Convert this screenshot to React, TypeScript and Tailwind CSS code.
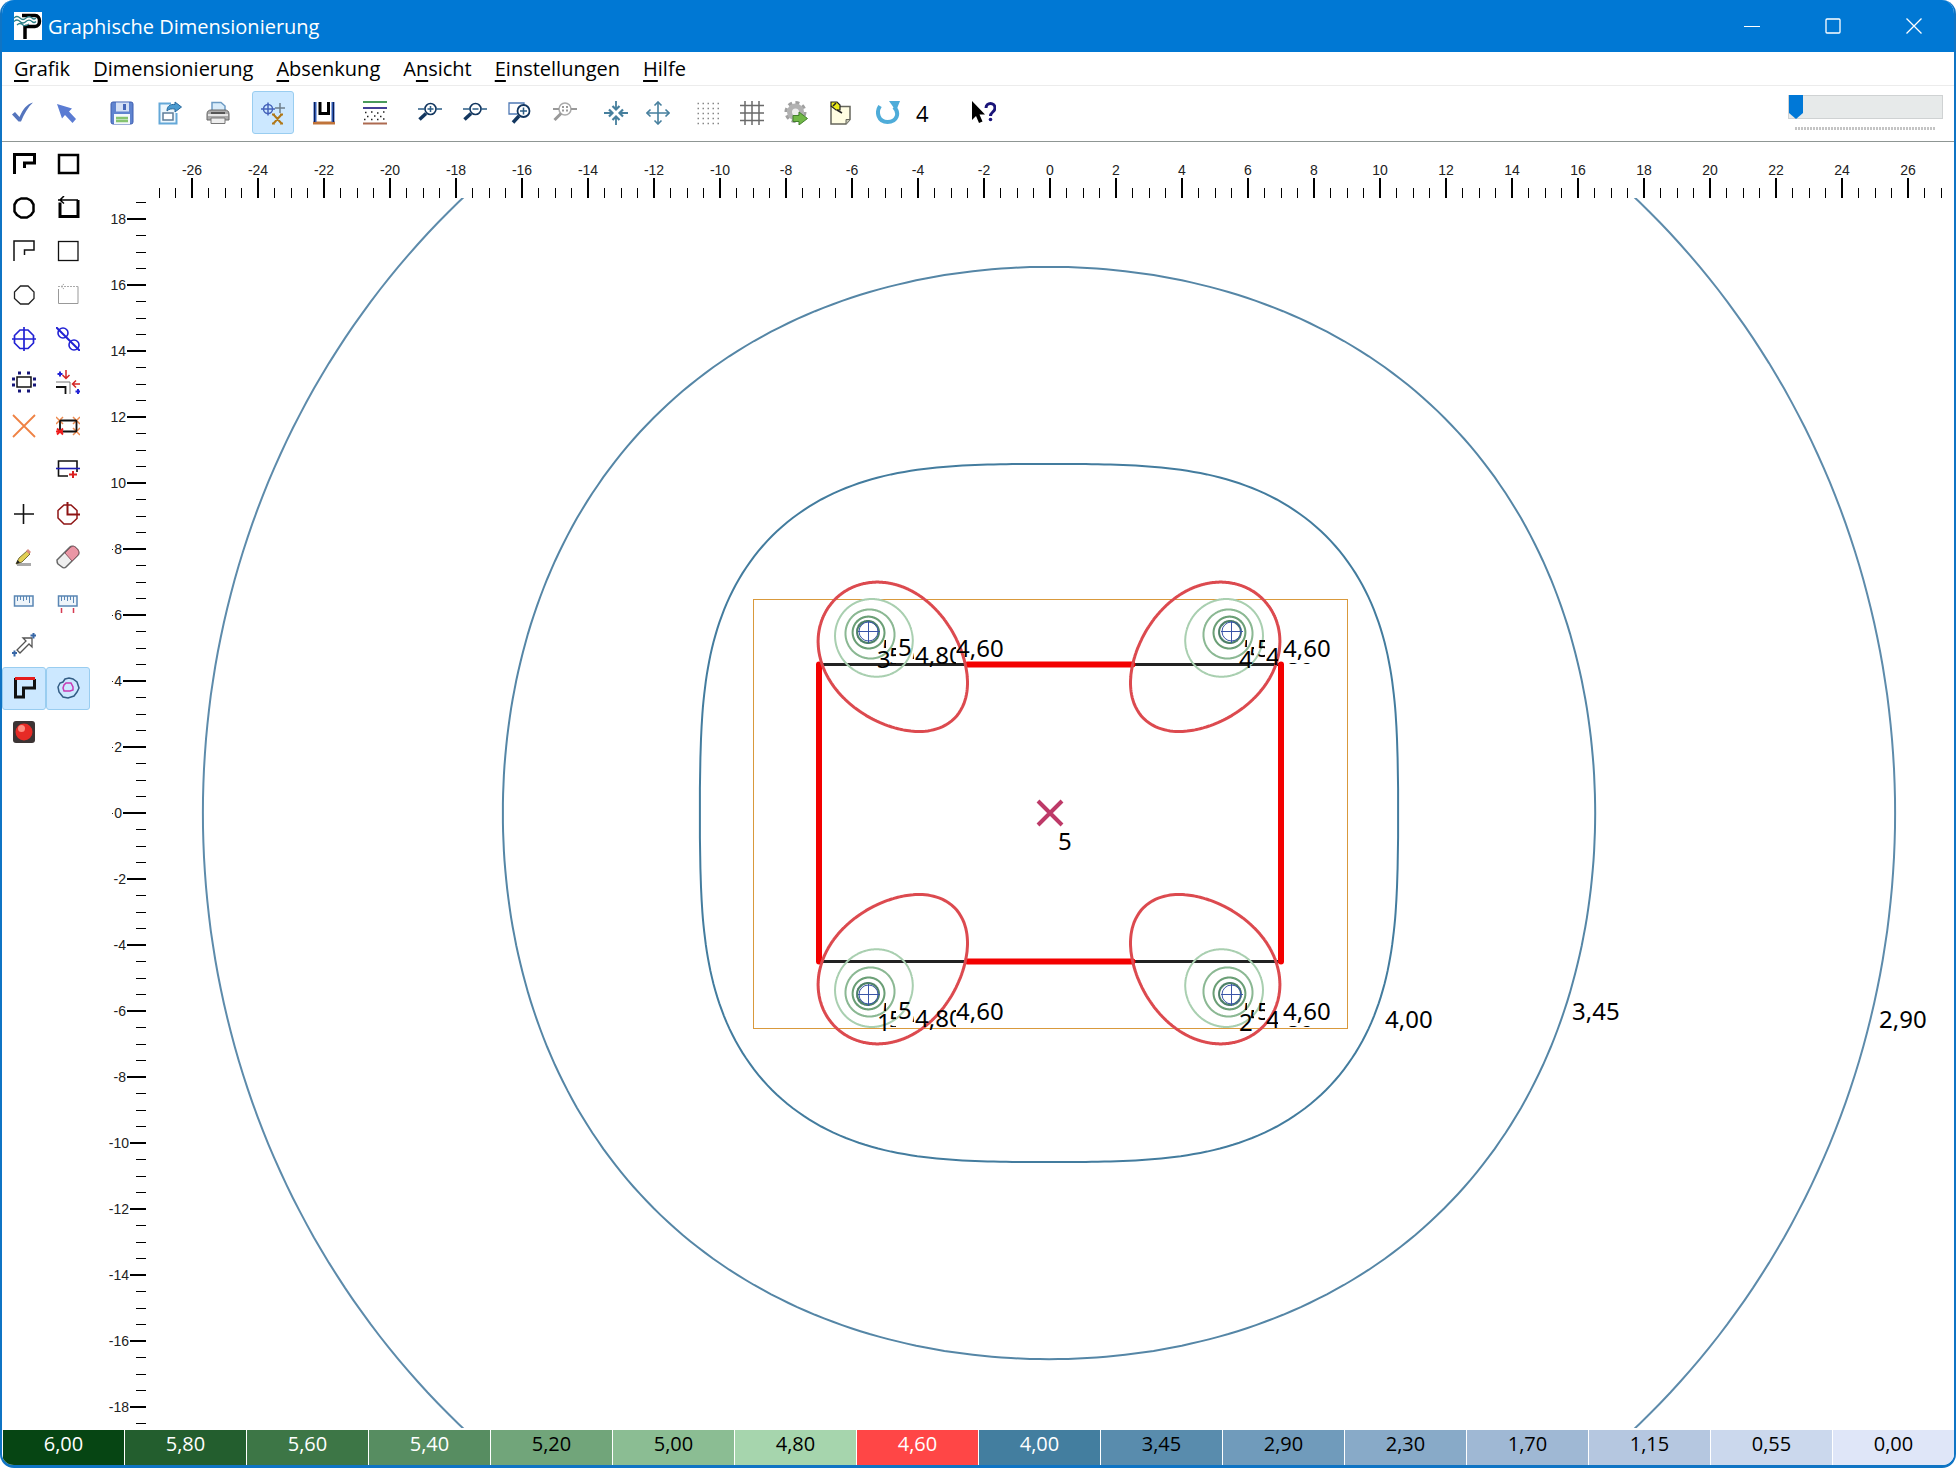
import { useState, type ReactNode } from 'react';
import clsx from 'clsx';

/* ---------- toolbar icons, all on a 24px grid ---------- */

function Icon({ children }: { children: ReactNode }) {
  return (
    <svg width="24" height="24" viewBox="0 0 24 24" fill="none" aria-hidden="true">
      {children}
    </svg>
  );
}

const icons = {
  check: <path d="M1 13.500 4 11l4.500 5C12 8 16 3 22 1.500 17 6 13 13 10 20.500H7.500Z" fill="#5575bd" />,
  pointer: <path d="M2 3 17 7.500l-3 3 7 7.500-3.500 4-7.500-8-3 3.500Z" fill="#5b7cd3" />,
  save: (
    <>
      <rect x="1" y="1" width="22" height="22" rx="2" fill="#5f83cf" stroke="#3f5eb0" />
      <rect x="6" y="1.500" width="13" height="9" fill="#d5e0f5" />
      <rect x="13" y="3" width="3" height="6" fill="#4667b8" />
      <rect x="4" y="13" width="16" height="10" fill="#f3f8fb" />
      <path d="M6 17h12M6 20h12" stroke="#86c470" strokeWidth="2.500" />
    </>
  ),
  exportFile: (
    <>
      <path d="M13 2.500H1.500v20h17V12" stroke="#64a8d8" strokeWidth="2" fill="#edf7fd" />
      <rect x="5" y="12" width="10" height="7" fill="#fff" stroke="#5d7d99" strokeWidth="1.500" />
      <path d="M9 10c0-5 3-7 8-6.500V1l6.500 5-6.500 5V8c-4-.5-6 0-8 2Z" fill="#4b9bd0" stroke="#28699c" />
    </>
  ),
  print: (
    <>
      <path d="M6 11V1.500h9l4 3.500v6" fill="#d9ecfa" stroke="#6d9bc4" strokeWidth="1.500" />
      <path d="M1 13c0-3 2-4 4-4h14c2 0 4 1 4 4v6H1Z" fill="#aaa" stroke="#666" />
      <path d="M2 14h20" stroke="#e6e6e6" strokeWidth="2" />
      <path d="M5 17h14v5.500H5Z" fill="#eee" stroke="#777" />
      <path d="M5 12h14" stroke="#555" strokeWidth="2" />
    </>
  ),
  wells: (
    <>
      <circle cx="7" cy="8" r="4.500" stroke="#4563ba" strokeWidth="1.500" />
      <path d="M7 1.500v13M0 8h14" stroke="#4563ba" strokeWidth="1.500" />
      <path d="M19 2v10M14 7h10" stroke="#6f7f8c" strokeWidth="1.500" />
      <path d="m12.500 13.500 8 9M20.500 13.500l-8 9M11 13.500h3M19 13.500h3M11 22.500h3M19 22.500h3" stroke="#b07818" strokeWidth="2" />
    </>
  ),
  pit: (
    <>
      <path d="M1 22h22" stroke="#c0743a" strokeWidth="3" />
      <path d="M3 1v20M21 1v20" stroke="#2f5bb5" strokeWidth="3" />
      <path d="M2.500 1v20M21.500 1v20" stroke="#0b1d55" strokeWidth="1" />
      <path d="M8 1v11.500h8.500V1" stroke="#000" strokeWidth="3" />
    </>
  ),
  layers: (
    <>
      <path d="M0 1h24" stroke="#4a9a5c" strokeWidth="2" />
      <path d="M0 7h24" stroke="#443f96" strokeWidth="2" />
      <path d="M0 22.500h24" stroke="#ad6a50" strokeWidth="2" />
      <path d="M2 11.500h1.500M8 11h1.500M14 12h1.500M20 11h1.500M4 15.500h1.500M11 15h1.500M17 15.500h1.500M1 18.500h1.500M8 18.500h1.500M14 18.500h1.500M20 18h1.500" stroke="#222" strokeWidth="1.500" />
    </>
  ),
  zoomIn: (
    <>
      <circle cx="12.500" cy="8" r="5.500" stroke="#12365f" strokeWidth="1.600" />
      <path d="M12.500 5v6M9.500 8h6M0 8h7M18 8h6" stroke="#2b5c85" strokeWidth="1.500" />
      <path d="m8 12.500-6.500 6" stroke="#12365f" strokeWidth="3.500" />
    </>
  ),
  zoomOut: (
    <>
      <circle cx="12.500" cy="8" r="5.500" stroke="#12365f" strokeWidth="1.600" />
      <path d="M9.500 8h6M0 8h7M18 8h6" stroke="#2b5c85" strokeWidth="1.500" />
      <path d="m8 12.500-6.500 6" stroke="#12365f" strokeWidth="3.500" />
    </>
  ),
  zoomWindow: (
    <>
      <path d="M9 13H1V2h15v3" stroke="#4f79b5" strokeWidth="1.300" />
      <circle cx="15.500" cy="10" r="6" fill="#fff" stroke="#12365f" strokeWidth="1.800" />
      <path d="M15.500 6.500v7M12 10h7" stroke="#2b5c85" strokeWidth="1.500" />
      <path d="m11 15-6 6.500" stroke="#12365f" strokeWidth="3.500" />
    </>
  ),
  zoomAll: (
    <>
      <circle cx="12" cy="8" r="6" stroke="#aaa" strokeWidth="1.500" />
      <path d="M9 6h2M13 6h2M9 9.500h2M13 9.500h2M0 8h6M18 8h6" stroke="#999" strokeWidth="1.800" />
      <path d="m8 12.500-6.500 6.500" stroke="#999" strokeWidth="3" />
    </>
  ),
  shrink: (
    <g stroke="#467f9d" strokeWidth="1.800">
      <path d="M12 0v8M12 24v-8M0 12h8M24 12h-8" />
      <path d="m8.500 5 3.500 3.500L15.500 5M8.500 19l3.500-3.500 3.500 3.500M5 8.500 8.500 12 5 15.500M19 8.500 15.500 12l3.500 3.500" strokeWidth="2.200" />
    </g>
  ),
  expand: (
    <g stroke="#467f9d" strokeWidth="1.600">
      <path d="M12 1v22M1 12h22" />
      <path d="m8.500 4.500 3.500-3.500 3.500 3.500M8.500 19.500l3.500 3.500 3.500-3.500M4.500 8.500 1 12l3.500 3.500M19.500 8.500 23 12l-3.500 3.500" />
    </g>
  ),
  dots: (
    <g stroke="#888" strokeWidth="1.500" strokeDasharray="1.500 3.500">
      <path d="M1.500 2.500h22M1.500 7.500h22M1.500 12.500h22M1.500 17.500h22M1.500 22.500h22" />
    </g>
  ),
  grid: <path d="M5 0v24M12 0v24M19 0v24M0 4.500h24M0 12h24M0 19.500h24" stroke="#6a6a6a" strokeWidth="1.500" />,
  gear: (
    <>
      <circle cx="11.500" cy="11" r="9.500" stroke="#a0a0a0" strokeWidth="3" strokeDasharray="4 3.400" />
      <circle cx="11.500" cy="11" r="6" fill="#eee" stroke="#b2b2b2" strokeWidth="5" />
      <path d="M9 14.500h6V11l8.500 6.500L15 24v-3.500H9Z" fill="#71b847" stroke="#43802d" />
    </>
  ),
  note: (
    <>
      <path d="M3 5.500h19v13l-4 4.500H3Z" fill="#fffde2" stroke="#65665c" strokeWidth="1.500" />
      <path d="M18 23v-4.500h4" stroke="#65665c" fill="#c5c5b5" />
      <path d="m3 1 6 0 3 3 0 5-4 0-5-4Z" fill="#eaea19" stroke="#222" strokeWidth="1.200" />
      <path d="m9 9 5 3M5 5l3-3" stroke="#222" strokeWidth="1.500" />
    </>
  ),
  undo: (
    <>
      <path d="M4 5C0 11 2 21 11.500 21S24 12 18 6" stroke="#4eacd9" strokeWidth="4" />
      <path d="M13 0h11l-4 10Z" fill="#4eacd9" />
    </>
  ),
  help: (
    <>
      <path d="M0 0v19l4-4 3 7 3.500-1.500-3-7H13Z" fill="#000" />
      <path d="M14 7c0-6 9-6 9 0 0 4-4.500 4-4.500 8" stroke="#1a1479" strokeWidth="3" />
      <circle cx="18.500" cy="18.500" r="1.800" fill="#1a1479" />
    </>
  ),

  // drawing tools on the left
  polyThick: <path d="M2.500 22V2.500h20V11H12.500v5" stroke="#000" strokeWidth="3" />,
  rectThick: <rect x="3" y="3" width="19" height="18" stroke="#000" strokeWidth="2.500" />,
  circleThick: <path d="M9 2.500h6l4 2 2.500 4v7l-2.500 3.500-4 2.500H9l-4-2.500-2.500-3.500v-7l2.500-4Z" stroke="#000" strokeWidth="2.500" strokeLinejoin="round" />,
  rectArrowThick: (
    <>
      <path d="M4 6.500V20.500h18V4" stroke="#000" strokeWidth="3" />
      <path d="M2 4h20M8 0 4 4l4 3.500" stroke="#000" strokeWidth="1.500" />
    </>
  ),
  polyThin: <path d="M2 22V2h20v9H12.500v5" stroke="#111" strokeWidth="1.500" />,
  rectThin: <rect x="2.500" y="2.500" width="19.500" height="19" stroke="#111" strokeWidth="1.300" />,
  circleThin: <path d="M8.500 3h7.500l6 6v6.500L16.500 21h-8l-6-5.500V9Z" stroke="#222" strokeWidth="1.300" />,
  rectArrowThin: (
    <>
      <path d="M2.500 6v14.500H22V3.500" stroke="#999" />
      <path d="M2 3.500h20M8 1 5 3.500 8 6" stroke="#aaa" strokeDasharray="2 1" />
    </>
  ),
  well: (
    <g stroke="#2222d4" strokeWidth="1.700">
      <path d="M8 3h8l5.500 5.500v7.500L16 21.500H8L2.500 16V8.500Z" />
      <path d="M12 0v24M0 12h24" />
    </g>
  ),
  wellRow: (
    <g stroke="#2222d4" strokeWidth="1.600">
      <circle cx="7" cy="6" r="5" />
      <circle cx="18" cy="18" r="5" />
      <path d="m0 0 24 24" strokeWidth="2" />
    </g>
  ),
  wellFrame: (
    <>
      <rect x="5" y="7" width="14" height="10" stroke="#111" strokeWidth="1.500" />
      <path d="M6 3h3M15 3h3M6 21h3M15 21h3M0 9h3M0 15h3M21 9h3M21 15h3" stroke="#16167a" strokeWidth="3" />
    </>
  ),
  moveCorner: (
    <>
      <path d="M0 12h14v12" stroke="#777" />
      <path d="M0 17h9.500v7" stroke="#111" strokeWidth="1.800" />
      <path d="M10 0v8M6.500 5 10 8.500 13.500 5M24 14h-7M20 10.500 16.500 14l3.500 3.500" stroke="#d42626" strokeWidth="1.500" />
      <path d="M1.500 4h5M4 1.500v5M19.500 21.500h5M22 19v5" stroke="#2222d4" strokeWidth="2" />
    </>
  ),
  cross: <path d="m1 1 22 22M23 1 1 23" stroke="#ef8244" strokeWidth="1.800" />,
  crossRect: (
    <>
      <path d="m0 3 7 7M7 3 0 10M17 3l7 7M24 3l-7 7M17 14l7 7M24 14l-7 7" stroke="#ee8b50" strokeWidth="1.500" />
      <rect x="4" y="6.500" width="16.500" height="11" rx="1" stroke="#111" strokeWidth="1.800" />
      <path d="m1 14.500 6 6M7 14.500l-6 6M0 17.500h7" stroke="#ee1c1c" strokeWidth="1.800" />
    </>
  ),
  splitRect: (
    <>
      <path d="M12 18H2.500V3H21v11" stroke="#111" strokeWidth="1.600" />
      <path d="M0 10.500h24" stroke="#1c1cb0" strokeWidth="1.600" />
      <path d="M13 16.500h8M17 13v7" stroke="#dc2020" strokeWidth="2" />
    </>
  ),
  plus: <path d="M11.500 2v20M2 12h20" stroke="#111" strokeWidth="1.600" />,
  sector: (
    <g stroke="#8e1414" strokeWidth="1.500">
      <path d="M8 3h7l6 5.500v8L15 22H8l-6-6V8.500Z" />
      <path d="M11.500 0v12.500H24" strokeWidth="2" />
    </g>
  ),
  pencil: (
    <>
      <path d="M5 19.500h14" stroke="#aaa" strokeWidth="3" />
      <path d="M4 19 7 13 15 6l3 3-8 8Z" fill="#e3cf54" stroke="#77703a" />
      <path d="m14 6 2-2 3 3-2 2Z" fill="#d88a7e" />
      <path d="m4 19 1.500-4L8 17.500Z" fill="#222" />
    </>
  ),
  eraser: (
    <>
      <path d="M1 15 14 2c1-1 3-1 5 0l3 3c1 2 1 4 0 5L10 22c-1 1-3 1-4 0l-4-3c-1-1-1-3-1-4Z" fill="#eee" stroke="#666" strokeWidth="1.500" />
      <path d="m9 8 6-6c2-1 3-1 4 0l3 3c1 2 1 3 0 5l-6 6Z" fill="#ea96a5" stroke="#8c5a64" />
    </>
  ),
  ruler: (
    <>
      <rect x="2.500" y="7" width="18.500" height="10" fill="#eff5fa" stroke="#5a86b4" strokeWidth="1.500" />
      <path d="M5.500 7v5M8.500 7v4M11.500 7v5M14.500 7v4M17.500 7v7" stroke="#5a86b4" />
    </>
  ),
  rulerMarks: (
    <>
      <rect x="2.500" y="7" width="18.500" height="10" fill="#eff5fa" stroke="#5a86b4" strokeWidth="1.500" />
      <path d="M5.500 7v5M8.500 7v4M11.500 7v5M14.500 7v4M17.500 7v7" stroke="#5a86b4" />
      <path d="M5.500 19v5M17.500 19v5" stroke="#d63b52" strokeWidth="1.500" />
    </>
  ),
  measure: (
    <>
      <path d="m5 17 9-9-3-3 9 0v9l-3-3-9 9Z" fill="#fff" stroke="#555" strokeWidth="1.300" />
      <path d="M0 20h5M2.500 17.500v6M18.500 2.500h5.500M21.500 0v5.500" stroke="#3868a8" strokeWidth="2" />
    </>
  ),
  pitOutline: (
    <>
      <path d="M3.500 2v19h8v-9h11V3" stroke="#111" strokeWidth="3" />
      <path d="M3 2.500h20" stroke="#e51d1d" strokeWidth="3" />
    </>
  ),
  isolines: (
    <>
      <path d="m9 3 4-1 4 1 4 3 2 6-2 4-3 4-6 2-5-1-4-5-1-5 2-4 3-1Z" stroke="#335d85" strokeWidth="1.500" />
      <path d="m10 7 5 0 2 4 0 3-3 1-6 0-1-3 1-3Z" stroke="#c73ab4" strokeWidth="1.500" />
    </>
  ),
  record: (
    <>
      <rect x="1" y="1" width="22" height="22" rx="3" fill="#3c3434" />
      <circle cx="12" cy="12" r="8.500" fill="#e62b26" />
      <circle cx="9.500" cy="8.500" r="3.500" fill="#ff8d80" />
    </>
  ),
};

type IconName = keyof typeof icons;
type Tool = { icon: IconName; label: string; active?: boolean };

const toolGroups: { className: string; tools: Tool[] }[] = [
  { className: 'gap-[2px]', tools: [{ icon: 'check', label: 'Übernehmen' }, { icon: 'pointer', label: 'Auswahl' }] },
  {
    className: 'ml-[13px] gap-[6px]',
    tools: [
      { icon: 'save', label: 'Speichern' },
      { icon: 'exportFile', label: 'Exportieren' },
      { icon: 'print', label: 'Drucken' },
    ],
  },
  {
    className: 'ml-[13px] gap-[9px]',
    tools: [
      { icon: 'wells', label: 'Brunnen', active: true },
      { icon: 'pit', label: 'Baugrube' },
      { icon: 'layers', label: 'Schichten' },
    ],
  },
  {
    className: 'ml-[13px] gap-[3px]',
    tools: [
      { icon: 'zoomIn', label: 'Vergrößern' },
      { icon: 'zoomOut', label: 'Verkleinern' },
      { icon: 'zoomWindow', label: 'Ausschnitt' },
      { icon: 'zoomAll', label: 'Alles' },
    ],
  },
  { className: 'ml-[9px]', tools: [{ icon: 'shrink', label: 'Zentrieren' }, { icon: 'expand', label: 'Verschieben' }] },
  {
    className: 'ml-2 gap-[2px]',
    tools: [
      { icon: 'dots', label: 'Raster' },
      { icon: 'grid', label: 'Gitter' },
      { icon: 'gear', label: 'Optionen' },
      { icon: 'note', label: 'Notiz' },
    ],
  },
];

const sideTools: (Tool | null)[] = [
  { icon: 'polyThick', label: 'Polygon' },
  { icon: 'rectThick', label: 'Rechteck' },
  { icon: 'circleThick', label: 'Kreis' },
  { icon: 'rectArrowThick', label: 'Rechteck gedreht' },
  { icon: 'polyThin', label: 'Umriss Polygon' },
  { icon: 'rectThin', label: 'Umriss Rechteck' },
  { icon: 'circleThin', label: 'Umriss Kreis' },
  { icon: 'rectArrowThin', label: 'Umriss gedreht' },
  { icon: 'well', label: 'Brunnen setzen' },
  { icon: 'wellRow', label: 'Brunnenreihe' },
  { icon: 'wellFrame', label: 'Brunnen umlaufend' },
  { icon: 'moveCorner', label: 'Abstand' },
  { icon: 'cross', label: 'Löschen' },
  { icon: 'crossRect', label: 'Bereich löschen' },
  null,
  { icon: 'splitRect', label: 'Teilen' },
  { icon: 'plus', label: 'Punkt' },
  { icon: 'sector', label: 'Sektor' },
  { icon: 'pencil', label: 'Zeichnen' },
  { icon: 'eraser', label: 'Radieren' },
  { icon: 'ruler', label: 'Lineal' },
  { icon: 'rulerMarks', label: 'Lineal mit Marken' },
  { icon: 'measure', label: 'Messen' },
  null,
  { icon: 'pitOutline', label: 'Baugrubenrand', active: true },
  { icon: 'isolines', label: 'Isolinien', active: true },
  { icon: 'record', label: 'Aufnahme' },
];

const menus = [
  ['', 'G', 'rafik'],
  ['', 'D', 'imensionierung'],
  ['', 'A', 'bsenkung'],
  ['A', 'n', 'sicht'],
  ['', 'E', 'instellungen'],
  ['', 'H', 'ilfe'],
];

const legend = [
  { value: '6,00', className: 'bg-[#064513] text-white' },
  { value: '5,80', className: 'bg-[#235e2e] text-white' },
  { value: '5,60', className: 'bg-[#3d7646] text-white' },
  { value: '5,40', className: 'bg-[#578d61] text-white' },
  { value: '5,20', className: 'bg-[#71a57a] text-black' },
  { value: '5,00', className: 'bg-[#8bbd93] text-black' },
  { value: '4,80', className: 'bg-[#a6d5ad] text-black' },
  { value: '4,60', className: 'bg-[#ff4646] text-white' },
  { value: '4,00', className: 'bg-[#437e9f] text-white' },
  { value: '3,45', className: 'bg-[#598cad] text-black' },
  { value: '2,90', className: 'bg-[#709bbb] text-black' },
  { value: '2,30', className: 'bg-[#88aac8] text-black' },
  { value: '1,70', className: 'bg-[#9fb8d4] text-black' },
  { value: '1,15', className: 'bg-[#b5c7e0] text-black' },
  { value: '0,55', className: 'bg-[#cbd8ed] text-black' },
  { value: '0,00', className: 'bg-[#dfe6f8] text-black' },
];

/* ---------- plan view ---------- */

const SCALE = 33;
const OX = 1050;
const OY = 813;
const WELL = 5.5;
// four wells on the corners of a square: the isolines are |z^4 + K| = c
const K = 4 * WELL ** 4;

const px = (x: number) => OX + x * SCALE;
const py = (y: number) => OY - y * SCALE;

function toPath(points: [number, number][]) {
  return 'M' + points.map(([x, y]) => `${(px(x) - 1).toFixed(1)} ${py(y).toFixed(1)}`).join('L') + 'Z';
}

function outerIsoline(halfWidth: number) {
  const c = halfWidth ** 4 + K;
  const points: [number, number][] = [];
  for (let i = 0; i < 360; i++) {
    const a = (i * Math.PI) / 180;
    const r = (-K * Math.cos(4 * a) + Math.sqrt(c * c - (K * Math.sin(4 * a)) ** 2)) ** 0.25;
    points.push([r * Math.cos(a), r * Math.sin(a)]);
  }
  return toPath(points);
}

function wellIsoline(c: number, sx: number, sy: number) {
  const points: [number, number][] = [];
  for (let i = 0; i < 720; i++) {
    const t = (i * Math.PI) / 360;
    const re = -K + c * Math.cos(t);
    const im = c * Math.sin(t);
    let arg = Math.atan2(im, re);
    if (arg < 0) arg += 2 * Math.PI;
    const r = Math.hypot(re, im) ** 0.25;
    points.push([sx * r * Math.cos(arg / 4), sy * r * Math.sin(arg / 4)]);
  }
  return toPath(points);
}

const wellLevels = [
  { c: 620, color: '#4d8068', width: 2 },
  { c: 900, color: '#6b9f76', width: 2 },
  { c: 1370, color: '#8bb893', width: 2 },
  { c: 2100, color: '#a9cfb0', width: 2 },
  { c: 3390, color: '#dc4a4f', width: 3 },
];

const corners = [
  [-1, 1],
  [1, 1],
  [-1, -1],
  [1, -1],
];

// Labels cover each other, so only a part of most of them stays visible.
type Piece = { text: string; tx: number; base: number; x: number; y: number; w: number; h: number };

const leftPieces: Piece[] = [
  { text: '5', tx: 882, base: 657, x: 882, y: 638, w: 4, h: 10 },
  { text: '5', tx: 889, base: 665, x: 889, y: 646, w: 7, h: 18 },
  { text: '5,', tx: 898, base: 656, x: 898, y: 636, w: 16, h: 24 },
  { text: '4,80', tx: 915, base: 664, x: 915, y: 640, w: 41, h: 27 },
];

const rightPieces: Piece[] = [
  { text: '5', tx: 1243, base: 657, x: 1243, y: 638, w: 4, h: 9 },
  { text: '5', tx: 1249, base: 664, x: 1249, y: 646, w: 5, h: 10 },
  { text: '5', tx: 1257, base: 657, x: 1257, y: 638, w: 8, h: 20 },
  { text: '4,80', tx: 1266, base: 665, x: 1266, y: 643, w: 12, h: 24 },
  { text: '80', tx: 1286, base: 664, x: 1286, y: 663, w: 30, h: 3 },
];

function PieceText({ piece, dy }: { piece: Piece; dy: number }) {
  return (
    <svg x={piece.x} y={piece.y + dy} width={piece.w} height={piece.h} overflow="hidden">
      <text x={piece.tx - piece.x} y={piece.base - piece.y}>
        {piece.text}
      </text>
    </svg>
  );
}

function Rulers() {
  const xs = Array.from({ length: 109 }, (_, i) => (i - 54) / 2);
  const ys = Array.from({ length: 75 }, (_, i) => (i - 37) / 2);
  const tickStart = (y: number) => {
    if (y % 2 !== 0) return 136;
    if (y >= 10) return 127;
    if (y >= 0) return 123;
    return y > -10 ? 127 : 130;
  };
  return (
    <g stroke="#000" fill="#222" fontSize="14" fontFamily='"Liberation Sans", Arial, sans-serif' shapeRendering="crispEdges">
      {xs.map((x) => (
        <g key={x}>
          <line x1={px(x)} x2={px(x)} y1={x % 2 === 0 ? 178 : 188} y2="198" strokeWidth={x % 2 === 0 ? 2 : 1} />
          {x % 2 === 0 && (
            <text x={px(x)} y="175" textAnchor="middle" stroke="none">
              {x}
            </text>
          )}
        </g>
      ))}
      {ys.map((y) => (
        <g key={y}>
          <line x1={tickStart(y)} x2="146" y1={py(y)} y2={py(y)} strokeWidth={y % 2 === 0 ? 2 : 1} />
          {y % 2 === 0 && (
            <text x={tickStart(y) - 1} y={py(y) + 5} textAnchor="end" stroke="none">
              {y}
            </text>
          )}
          {y % 2 === 0 && y >= 0 && y < 10 && <rect x="112" y={py(y)} width="1" height="1" stroke="none" />}
        </g>
      ))}
    </g>
  );
}

function PlanView() {
  return (
    <svg
      viewBox="100 142 1854 1288"
      className="block h-auto w-full min-w-0 flex-1"
      fill="none"
      role="img"
      aria-label="Absenkungsplan"
    >
      <clipPath id="plan">
        <rect x="148" y="198" width="1800" height="1230" />
      </clipPath>
      <Rulers />
      <g clipPath="url(#plan)">
        <path d={outerIsoline(25.64)} stroke="#5d8bab" strokeWidth="2" />
        <path d={outerIsoline(16.55)} stroke="#5586a6" strokeWidth="2" />
        <path d={outerIsoline(10.58)} stroke="#437c9e" strokeWidth="2" />
      </g>

      <rect x="753.5" y="599.5" width="594" height="429" stroke="#d9993c" />
      <path d={`M${px(-7)} ${py(4.5)}H${px(7)}M${px(-7)} ${py(-4.5)}H${px(7)}`} stroke="#222" strokeWidth="3" />
      <path
        d={`M${px(-7)} ${py(4.5)}V${py(-4.5)}M${px(7)} ${py(4.5)}V${py(-4.5)}M${px(-2.5)} ${py(4.5)}H${px(2.5)}M${px(-2.5)} ${py(-4.5)}H${px(2.5)}`}
        stroke="#f30000"
        strokeWidth="6"
        strokeLinecap="round"
      />

      {corners.map(([sx, sy]) => (
        <g key={`${sx}${sy}`}>
          {wellLevels.map((level) => (
            <path key={level.c} d={wellIsoline(level.c, sx, sy)} stroke={level.color} strokeWidth={level.width} />
          ))}
          <g stroke="#3a55a8" transform={`translate(${px(sx * WELL)} ${py(sy * WELL)})`}>
            <circle r="9.500" />
            <path d="M-11 0H11M0-11V11" shapeRendering="crispEdges" />
          </g>
        </g>
      ))}

      <path d="m-12-12 24 24m0-24-24 24" transform={`translate(${OX} ${OY})`} stroke="#bd3a68" strokeWidth="4" />

      <g fill="#000" fontSize="24" fontFamily='"Noto Sans", "Open Sans", sans-serif'>
        {[0, 363].map((dy) => (
          <g key={dy}>
            {[...leftPieces, ...rightPieces].map((piece) => (
              <PieceText key={`${piece.x}-${piece.y}`} piece={piece} dy={dy} />
            ))}
            <text x="956" y={657 + dy}>4,60</text>
            <text x="1283" y={657 + dy}>4,60</text>
          </g>
        ))}
        <text x="877" y="668">3</text>
        <text x="1239" y="668">4</text>
        <text x="877" y="1031">1</text>
        <text x="1239" y="1031">2</text>
        <text x="1058" y="850">5</text>
        <text x="1385" y="1028">4,00</text>
        <text x="1572" y="1020">3,45</text>
        <text x="1879" y="1028">2,90</text>
      </g>
    </svg>
  );
}

/* ---------- window parts ---------- */

function TitleBar() {
  return (
    <header className="flex h-[52px] items-center bg-[#0078d4] pl-3 text-white">
      <svg width="28" height="28" viewBox="0 0 28 28" fill="none" aria-hidden="true">
        <rect width="28" height="28" fill="#fff" />
        <path d="M11 27V14M8 3.500h13c6 0 6 11 0 11H11" stroke="#000" strokeWidth="3.500" />
        <path
          d="M0 6c2-2 4-2 6 0s4 2 6 0 4-2 6 0 3 1 4 0M0 9.500c2-2 4-2 6 0s4 2 6 0 4-2 6 0 3 1 4 0M3 13c2-2 4-2 6 0s4 0 6-1"
          stroke="#2a7f86"
          strokeWidth="1.200"
        />
      </svg>
      <h1 className="ml-[6px] pt-[2px] text-[20px]">Graphische Dimensionierung</h1>
      <div className="ml-auto flex self-stretch">
        <button type="button" aria-label="Minimieren" className="flex w-[81px] items-center justify-center">
          <svg width="16" height="16" stroke="#fff" aria-hidden="true">
            <path d="M0 8.500h16" />
          </svg>
        </button>
        <button type="button" aria-label="Maximieren" className="flex w-[81px] items-center justify-center">
          <svg width="16" height="16" stroke="#fff" strokeWidth="1.300" fill="none" aria-hidden="true">
            <rect x="1" y="1" width="14" height="14" rx="1" />
          </svg>
        </button>
        <button type="button" aria-label="Schließen" className="flex w-[81px] items-center justify-center">
          <svg width="16" height="16" stroke="#fff" strokeWidth="1.300" aria-hidden="true">
            <path d="m.5.5 15 15m0-15-15 15" />
          </svg>
        </button>
      </div>
    </header>
  );
}

function ToolButton({ tool, className }: { tool: Tool; className?: string }) {
  return (
    <button
      type="button"
      aria-label={tool.label}
      aria-pressed={tool.active}
      className={clsx(
        'flex items-center justify-center rounded-[3px] border',
        tool.active ? 'border-[#99cdf0] bg-[#cce8ff]' : 'border-transparent',
        className,
      )}
    >
      <Icon>{icons[tool.icon]}</Icon>
    </button>
  );
}

function Toolbar() {
  const [level, setLevel] = useState(0);

  return (
    <div className="flex h-14 items-center border-b border-[#8f9694] pb-[2px]">
      {toolGroups.map((group, i) => (
        <div key={i} className={clsx('flex', group.className)}>
          {group.tools.map((tool) => (
            <ToolButton key={tool.icon} tool={tool} className="h-[43px] w-[42px]" />
          ))}
        </div>
      ))}
      <ToolButton tool={{ icon: 'undo', label: 'Rückgängig' }} className="ml-[6px] h-[43px] w-[42px]" />
      <span className="ml-[7px] pt-[2px] text-[22px]">4</span>
      <ToolButton tool={{ icon: 'help', label: 'Hilfe' }} className="ml-[34px] h-[43px] w-[42px]" />

      <div className="mr-[11px] ml-auto flex w-[155px] flex-col gap-2">
        <input
          type="range"
          aria-label="Transparenz"
          min={0}
          max={50}
          value={level}
          onChange={(e) => setLevel(Number(e.target.value))}
          className="h-6 w-full appearance-none border border-[#cfd2d3] bg-[#e7eaea] [&::-webkit-slider-thumb]:h-6 [&::-webkit-slider-thumb]:w-[14px] [&::-webkit-slider-thumb]:appearance-none [&::-webkit-slider-thumb]:bg-[#0078d7] [&::-webkit-slider-thumb]:[clip-path:polygon(0_0,100%_0,100%_75%,50%_100%,0_75%)]"
        />
        <div className="mx-[7px] h-[3px] bg-[repeating-linear-gradient(90deg,#c4c4c4_0_2px,transparent_2px_3px)]" />
      </div>
    </div>
  );
}

export default function App() {
  return (
    <div className="flex min-h-screen flex-col overflow-hidden rounded-[14px] border-x-2 border-b-[3px] border-[#0f74c4] bg-white font-['Open_Sans','Noto_Sans',sans-serif] text-black">
      <TitleBar />
      <nav className="flex h-[34px] items-center gap-[23px] border-b border-[#ececec] pl-3 text-[20px]">
        {menus.map(([before, key, after]) => (
          <button key={after} type="button">
            {before}
            <span className="underline underline-offset-4">{key}</span>
            {after}
          </button>
        ))}
      </nav>
      <Toolbar />

      <main className="flex flex-1 items-start">
        <aside className="grid h-[612px] w-[98px] shrink-0 grid-cols-[44px_44px] grid-rows-[repeat(14,minmax(0,1fr))]">
          {sideTools.map((tool, i) => (tool ? <ToolButton key={tool.icon} tool={tool} /> : <span key={i} />))}
        </aside>
        <PlanView />
      </main>

      <footer className="grid h-[35px] grid-cols-16 gap-px pl-px text-center text-[20px] leading-[27px]">
        {legend.map((item) => (
          <div key={item.value} className={item.className}>
            {item.value}
          </div>
        ))}
      </footer>
    </div>
  );
}
